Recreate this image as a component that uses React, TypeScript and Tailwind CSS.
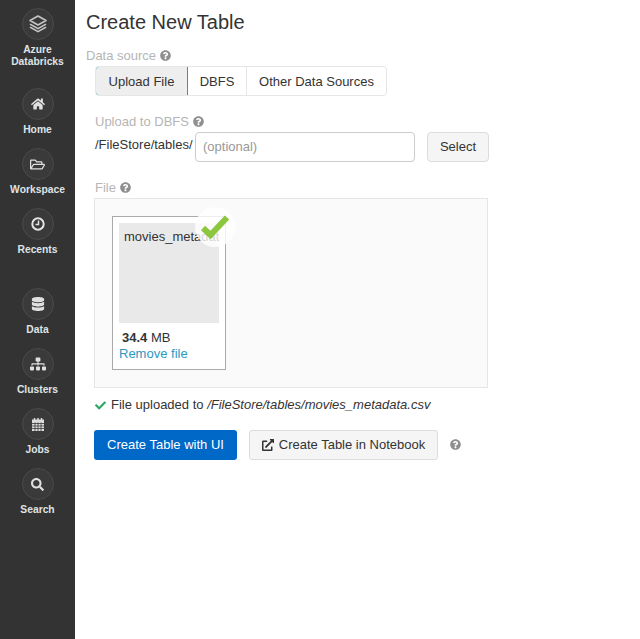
import { FaCheck, FaDatabase, FaExternalLinkAlt, FaHome, FaQuestionCircle, FaRegFolderOpen, FaSearch, FaSitemap } from "react-icons/fa";
import type { ReactNode } from "react";

function LayersIcon() {
  return (
    <svg width="20" height="20" viewBox="0 0 20 20">
      <path d="M10 2l8 4.500-8 4.500-8-4.500z" fill="none" stroke="#c4c4c4" strokeWidth="1.600" strokeLinejoin="round" />
      <path d="M2.500 9.500L10 13.700l7.500-4.200 1 1.200L10 15.600 1.500 10.700z" fill="#c4c4c4" />
      <path d="M2.500 12.500L10 16.700l7.500-4.200 1 1.200L10 18.600 1.500 13.700z" fill="#c4c4c4" />
    </svg>
  );
}

function ClockIcon() {
  return (
    <svg width="14" height="14" viewBox="0 0 14 14">
      <circle cx="7" cy="7" r="5.700" fill="none" stroke="#e4e4e4" strokeWidth="2" />
      <path d="M7.500 3.500v4H4.500" fill="none" stroke="#e4e4e4" strokeWidth="1.500" />
    </svg>
  );
}

function CalendarIcon() {
  return (
    <svg width="14" height="15" viewBox="0 0 14 15">
      <path d="M1 2.500h12V14H1z" fill="#dcdcdc" />
      <path d="M3.500 1v3M7 1v3M10.500 1v3" stroke="#dcdcdc" strokeWidth="1.500" />
      <path d="M1 6.500h12M1 9h12M1 11.500h12M4 5.500V14M7 5.500V14M10 5.500V14" stroke="#3a3a3a" strokeWidth="0.800" />
    </svg>
  );
}

function NavItem({ icon, label, className = "" }: { icon: ReactNode; label: ReactNode; className?: string }) {
  return (
    <div className={`flex flex-col items-center ${className}`}>
      <div className="flex h-8 w-8 items-center justify-center rounded-full border border-[#4a4a4a] bg-[#3a3a3a] text-[#e0e0e0]">
        {icon}
      </div>
      <div className="mt-1 text-center text-[10.3px] font-bold leading-3 text-[#dfe3e6]">{label}</div>
    </div>
  );
}

function Help({ className = "" }: { className?: string }) {
  return <FaQuestionCircle className={`inline-block text-[11px] text-[#8f8f8f] ${className}`} />;
}

function Label({ children }: { children: ReactNode }) {
  return <div className="flex h-5 items-center gap-1 pt-px text-[13px] text-[#b5b5b5]">{children}</div>;
}

export default function App() {
  return (
    <div className="flex h-[639px] w-[640px] bg-white font-['Liberation_Sans',Arial,sans-serif] text-[13px] text-[#333]">
      <nav className="w-[75px] shrink-0 bg-[#333333] pt-2">
        <NavItem icon={<LayersIcon />} label={<>Azure<br />Databricks</>} />
        <NavItem className="mt-[20px]" icon={<FaHome size={14} />} label="Home" />
        <NavItem className="mt-3" icon={<FaRegFolderOpen size={15} />} label="Workspace" />
        <NavItem className="mt-3" icon={<ClockIcon />} label="Recents" />
        <NavItem className="mt-8" icon={<FaDatabase size={14} />} label="Data" />
        <NavItem className="mt-3" icon={<FaSitemap size={16} />} label="Clusters" />
        <NavItem className="mt-3" icon={<CalendarIcon />} label="Jobs" />
        <NavItem className="mt-3" icon={<FaSearch size={13} />} label="Search" />
      </nav>

      <main className="flex-1 pl-[11px] pt-[10px]">
        <h1 className="text-xl leading-6 text-[#333]">Create New Table</h1>

        <div className="mt-[11px]">
          <Label>Data source <Help /></Label>
        </div>

        <div className="ml-[9px] mt-[1px] w-[292px]">
          <div className="flex h-[30px] overflow-hidden rounded border border-[#e6e6e6]">
            <div className="-m-px flex h-[30px] w-[93px] items-center justify-center rounded-l border border-[#2b98b8] bg-[#eeeeee] pt-[2px]">Upload File</div>
            <div className="flex w-[60px] items-center justify-center border-r border-[#e6e6e6] pl-px pt-px">DBFS</div>
            <div className="flex flex-1 items-center justify-center pt-px">Other Data Sources</div>
          </div>
        </div>

        <div className="ml-[9px] mt-[15px] w-[394px]">
          <Label>Upload to DBFS <Help /></Label>
          <div className="mt-px flex items-center">
            <span className="mt-[-4px] w-[100px]">/FileStore/tables/</span>
            <input
              readOnly
              placeholder="(optional)"
              className="h-[30px] w-[220px] rounded border border-[#cccccc] px-[7px] pb-[2px] text-[13px] outline-none placeholder:text-[#999]"
            />
            <button className="ml-3 h-[30px] w-[62px] rounded border border-[#dcdcdc] bg-[#f5f5f5] text-[#333]">Select</button>
          </div>
          <div className="mt-[15px]">
            <Label>File <Help /></Label>
          </div>
        </div>

        <div className="ml-[8px] mt-px flex h-[190px] w-[394px] border border-[#e6e6e6] bg-[#fafafa] pl-[17px] pt-[17px]">
          <div className="relative h-[154px] w-[114px] border border-[#aaaaaa] bg-white px-[6px] pt-[6px]">
            <div className="h-[100px] w-[100px] overflow-hidden whitespace-nowrap bg-[#e9e9e9] pl-[5px] pt-[6px] leading-4">movies_metadata</div>
            <div className="mt-[5px] pl-[3px] leading-5"><b className="font-bold">34.4</b> MB</div>
            <div className="-mt-[2px] leading-4 text-[#2b98c4]">Remove file</div>
            <div className="absolute -right-[10px] -top-[10px] flex h-10 w-10 items-center justify-center rounded-full bg-white/80">
              <svg width="30" height="28" viewBox="0 0 30 28" className="overflow-visible">
                <path d="M3 15l7.500 7L27 4.500" fill="none" stroke="#8cc63f" strokeWidth="6" />
              </svg>
            </div>
          </div>
        </div>

        <div className="ml-[9px] mt-[7px] flex h-5 items-center">
          <FaCheck className="mr-[5px] text-[11px] text-[#2ea866]" />
          <span>File uploaded to <i className="italic">/FileStore/tables/movies_metadata.csv</i></span>
        </div>

        <div className="ml-[8px] mt-[15px] flex items-center">
          <button className="h-[30px] w-[143px] rounded-[3px] bg-[#0069c8] text-white">Create Table with UI</button>
          <button className="ml-3 flex h-[30px] w-[189px] items-center justify-center gap-[5px] rounded-[3px] border border-[#dcdcdc] bg-[#f5f5f5] text-[#333]">
            <FaExternalLinkAlt className="text-[12px]" />
            Create Table in Notebook
          </button>
          <Help className="mb-[2px] ml-3" />
        </div>
      </main>
    </div>
  );
}
